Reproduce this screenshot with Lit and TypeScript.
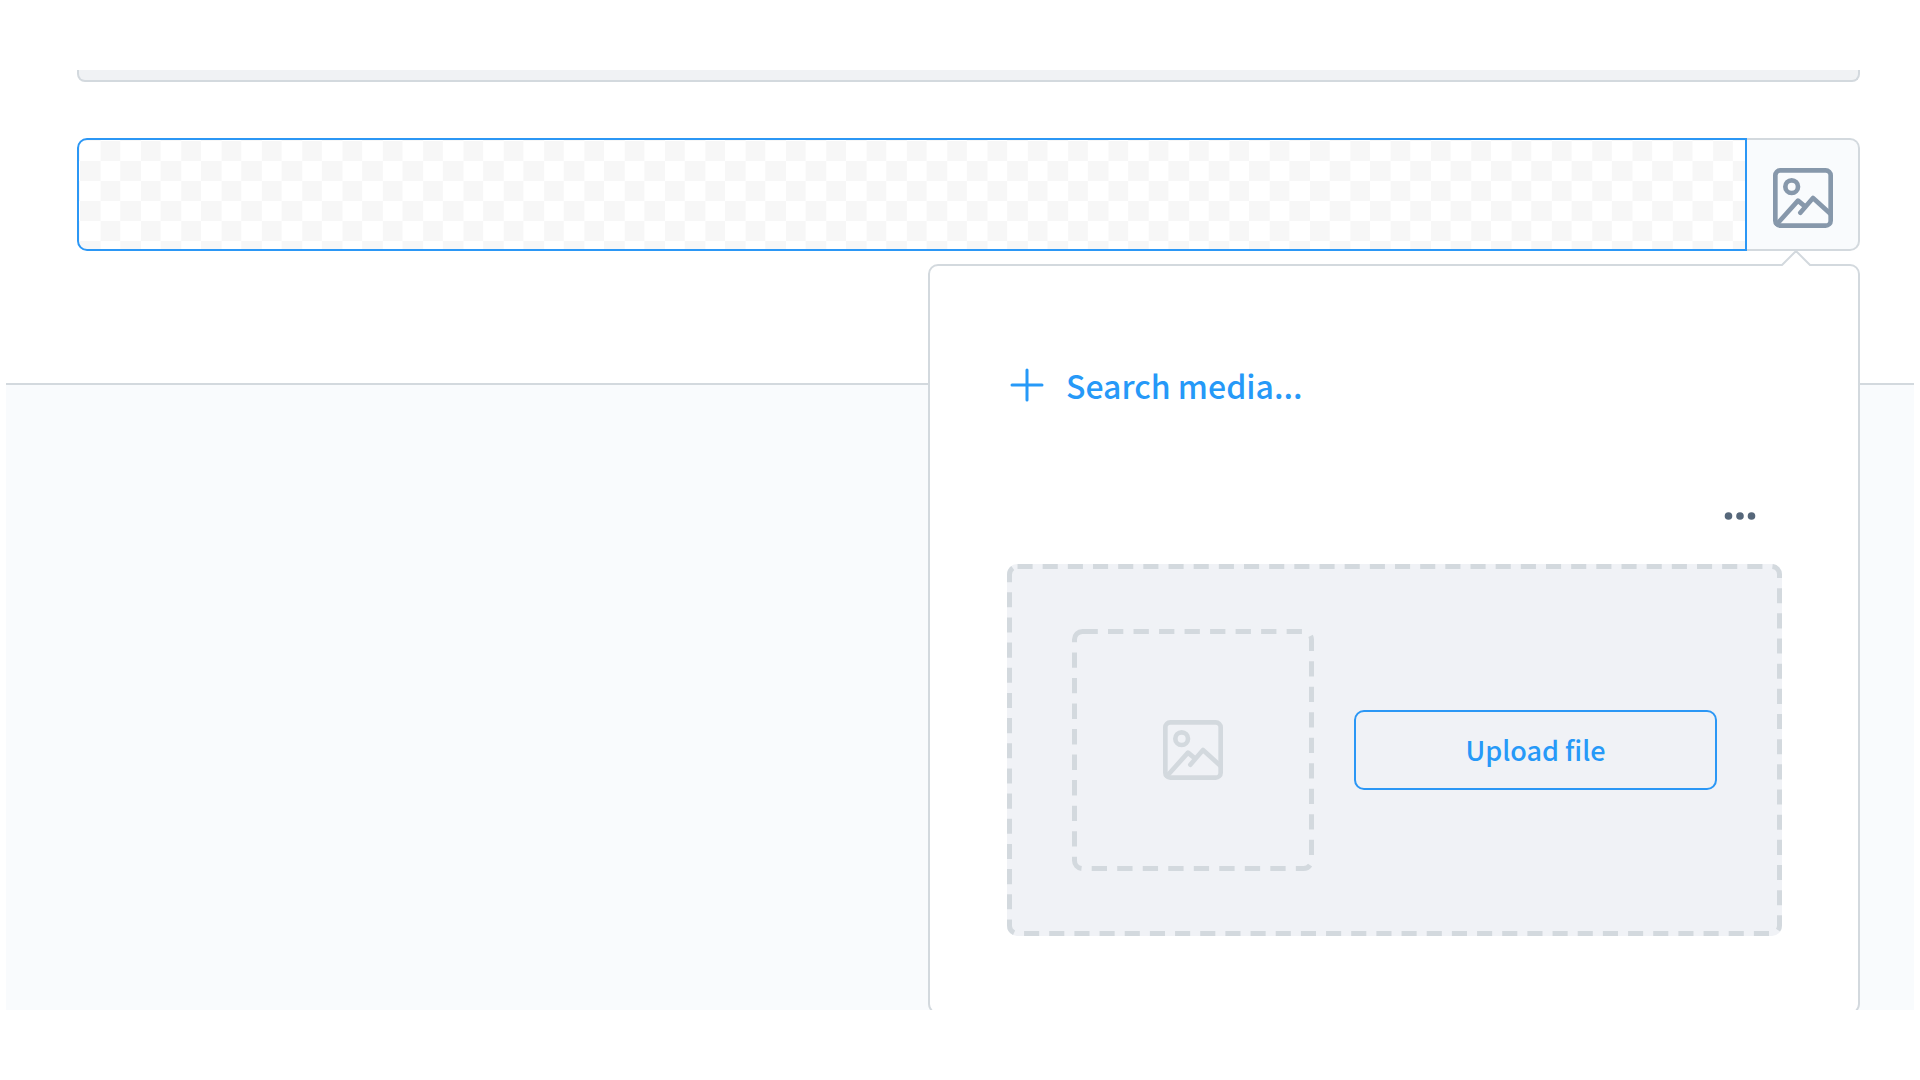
import { LitElement, html, css } from "lit";
import { customElement } from "lit/decorators.js";

/** Framed landscape glyph; takes its colour from the surrounding text colour. */
@customElement("picture-icon")
class PictureIcon extends LitElement {
  static styles = css`
    :host {
      display: block;
      width: 60px;
      height: 60px;
    }
    .glyph {
      display: block;
      width: 100%;
      height: 100%;
      fill: none;
      stroke: currentColor;
      stroke-width: 14;
      stroke-linecap: round;
      stroke-linejoin: round;
    }
  `;

  render() {
    return html`
      <svg class="glyph" viewBox="0 0 180 180" aria-hidden="true">
        <rect x="7" y="7" width="166" height="166" rx="15" />
        <circle cx="56" cy="56" r="19" />
        <path d="M12 168 75 98 93 113M82 134 120 90 173 138" />
      </svg>
    `;
  }
}

@customElement("app-root")
class AppRoot extends LitElement {
  static styles = css`
    :host {
      --blue: #2b97f5;
      --line: #d3d9de;
      display: block;
      background: #fff;
      font-family: "Noto Sans CJK SC", "Noto Sans", sans-serif;
      font-weight: 500;
    }
    * {
      box-sizing: border-box;
    }
    button,
    input {
      margin: 0;
      padding: 0;
      border: 0;
      border-radius: 0;
      background: none;
      color: inherit;
      font: inherit;
      outline: none;
    }
    button {
      cursor: pointer;
    }
    .frame {
      display: flex;
      flex-direction: column;
      min-height: calc(100vh - 140px);
      margin: 70px 6px;
      overflow: hidden;
      background: #f9fbfd;
    }
    .card {
      padding: 0 54px 132px 71px;
      border-bottom: 2px solid var(--line);
      background: #fff;
    }
    .previous {
      height: 12px;
      margin-bottom: 56px;
      border: 2px solid var(--line);
      border-top: 0;
      border-radius: 0 0 8px 8px;
      background: #f0f2f4;
    }
    .field {
      position: relative;
      display: flex;
      height: 113px;
    }
    .preview {
      flex: 1;
      min-width: 0;
      border: 2px solid var(--blue);
      border-radius: 10px 0 0 10px;
      background: #fff
        conic-gradient(#fff 25%, #f7f7f7 0 50%, #fff 0 75%, #f7f7f7 0) 1px 21px /
        2.42% 40px;
    }
    .toggle {
      display: flex;
      align-items: center;
      justify-content: center;
      width: 113px;
      padding-top: 7px;
      border: 2px solid var(--line);
      border-left: 0;
      border-radius: 0 10px 10px 0;
      background: #f9fbfd;
      color: #8798ab;
    }
    .popover {
      position: absolute;
      z-index: 1;
      top: 126px;
      right: 0;
      display: flex;
      flex-direction: column;
      align-items: flex-start;
      width: 932px;
      max-width: 100%;
      padding: 95px 76px 76px 77px;
      border: 2px solid var(--line);
      border-radius: 10px;
      background: #fff;
    }
    .caret {
      position: absolute;
      top: -16px;
      right: 46px;
      width: 32px;
      height: 16px;
      fill: #fff;
      stroke: var(--line);
      stroke-width: 2;
    }
    .search {
      display: flex;
      align-items: center;
      gap: 22px;
      height: 48px;
      margin: 0 0 91px 3px;
      color: #2699f8;
      font-size: 32px;
      line-height: 48px;
    }
    .plus {
      width: 34px;
      height: 34px;
      fill: none;
      stroke: currentColor;
      stroke-width: 3;
      stroke-linecap: round;
    }
    .more {
      align-self: flex-end;
      height: 32px;
      margin: 0 26px 32px 0;
      color: #56677a;
    }
    .dots {
      display: block;
      width: 32px;
      height: 32px;
      fill: currentColor;
    }
    .dropzone {
      position: relative;
      display: flex;
      align-items: center;
      gap: 40px;
      align-self: stretch;
      padding: 65px;
      border-radius: 10px;
      background: #f0f2f6;
    }
    .thumb {
      position: relative;
      display: flex;
      align-items: center;
      justify-content: center;
      width: 242px;
      height: 242px;
      color: var(--line);
    }
    .dashes {
      position: absolute;
      inset: 0;
      width: 100%;
      height: 100%;
      fill: none;
      stroke: var(--line);
      stroke-width: 5;
      stroke-dasharray: 3 2;
      pointer-events: none;
    }
    .dashes rect {
      width: calc(100% - 5px);
      height: calc(100% - 5px);
    }
    .upload {
      flex: 1;
      height: 80px;
      border: 2px solid var(--blue);
      border-radius: 10px;
      color: #2699f8;
      font-size: 27px;
      line-height: 40px;
    }
  `;

  private dashes(length: number) {
    return html`
      <svg class="dashes" aria-hidden="true">
        <rect x="2.5" y="2.5" rx="8" pathLength=${length} />
      </svg>
    `;
  }

  render() {
    return html`
      <main class="frame">
        <section class="card">
          <div class="previous"></div>
          <div class="field">
            <input class="preview" type="text" readonly aria-label="Media" />
            <button class="toggle" type="button" aria-label="Choose media">
              <picture-icon></picture-icon>
            </button>
            <div class="popover">
              <svg class="caret" viewBox="0 0 32 16" aria-hidden="true">
                <path d="M1 16 2 15 16 1 30 15 31 16" />
              </svg>
              <button class="search" type="button">
                <svg class="plus" viewBox="0 0 34 34" aria-hidden="true">
                  <path d="M17 2V32M2 17H32" />
                </svg>
                <span>Search media...</span>
              </button>
              <button class="more" type="button" aria-label="More options">
                <svg class="dots" viewBox="0 0 32 32" aria-hidden="true">
                  <circle cx="4.5" cy="16" r="3.8" />
                  <circle cx="16" cy="16" r="3.8" />
                  <circle cx="27.5" cy="16" r="3.8" />
                </svg>
              </button>
              <div class="dropzone">
                ${this.dashes(449)}
                <div class="thumb">
                  ${this.dashes(183)}
                  <picture-icon></picture-icon>
                </div>
                <button class="upload" type="button">Upload file</button>
              </div>
            </div>
          </div>
        </section>
      </main>
    `;
  }
}
